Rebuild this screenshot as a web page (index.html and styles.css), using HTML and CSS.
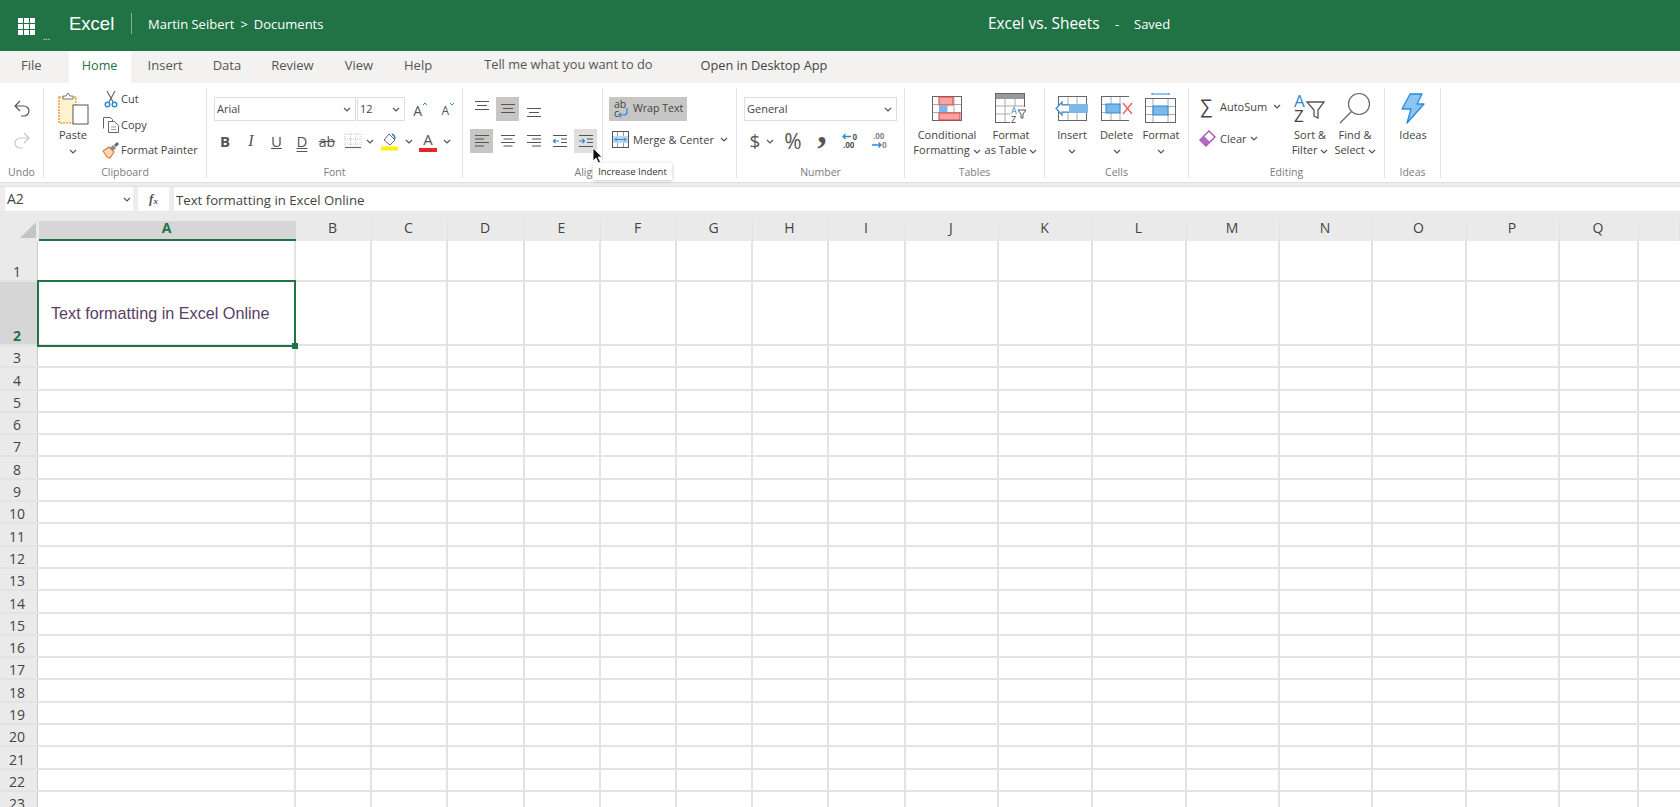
FILE: index.html
```html
<!DOCTYPE html>
<html lang="en">
<head>
<meta charset="utf-8">
<title>Excel vs. Sheets</title>
<link rel="stylesheet" href="styles.css">
</head>
<body>
<header class="hdr">
  <div class="waffle"><i></i><i></i><i></i><i></i><i></i><i></i><i></i><i></i><i></i><span class="dots">...</span></div>
  <div class="brand">Excel</div>
  <div class="crumb">Martin Seibert<span class="crumb-sep">&gt;</span>Documents</div>
  <div class="title">Excel vs. Sheets</div>
  <div class="dash">-</div>
  <div class="saved">Saved</div>
</header>

<nav class="tabs">
  <div class="tab tab-file">File</div>
  <div class="tab active">Home</div>
  <div class="tab">Insert</div>
  <div class="tab">Data</div>
  <div class="tab">Review</div>
  <div class="tab">View</div>
  <div class="tab">Help</div>
  <div class="tell">Tell me what you want to do</div>
  <div class="open">Open in Desktop App</div>
</nav>

<section class="ribbon">
  <div class="grp g-undo">
    <div class="body col-center">
      <svg class="undo" width="20" height="20" viewBox="0 0 20 20" fill="none" stroke="#555" stroke-width="1.2"><path d="M8 3 3 8l5 5M3 8h9a5 5 0 0 1 0 10H9"/></svg>
      <svg class="redo" width="20" height="20" viewBox="0 0 20 20" fill="none" stroke="#c8c8c8" stroke-width="1.2"><path d="m12 3 5 5-5 5M17 8H8a5 5 0 0 0 0 10h3"/></svg>
    </div>
    <div class="glabel">Undo</div>
  </div>

  <div class="grp g-clip">
    <div class="body flex">
      <div class="big paste">
        <div class="bigic">
          <svg width="31" height="33" viewBox="0 0 31 33" fill="none"><rect x="1" y="5" width="17" height="26" fill="#fdf3d0" stroke="#f0a24a" stroke-width="1.6" stroke-dasharray="2 1"/><path d="M5 7V4h3l2-3 2 3h3v3z" fill="#fff" stroke="#777"/><rect x="15" y="13" width="15" height="19" fill="#fff" stroke="#555"/></svg>
        </div>
        <div class="lbl">Paste</div>
        <svg class="chev" width="8" height="5" viewBox="0 0 8 5"><path d="m1 1 3 3 3-3" fill="none" stroke="#555" stroke-width="1.2"/></svg>
      </div>
      <div class="smalls">
        <div class="sm"><span class="smic"><svg width="14" height="18" viewBox="0 0 14 18" fill="none"><path d="M3 1l6 11M11 1 5 12" stroke="#666" stroke-width="1.2"/><circle cx="3.500" cy="14.500" r="2.300" stroke="#2b88d8" stroke-width="1.4"/><circle cx="10.500" cy="14.500" r="2.300" stroke="#2b88d8" stroke-width="1.400"/></svg></span>Cut</div>
        <div class="sm"><span class="smic"><svg width="18" height="17" viewBox="0 0 18 17" fill="none" stroke="#666"><path d="M1.500 12.500V1.500h7l2 2v2"/><path d="M6.500 5.500h6l4 4v7h-10z" fill="#fff"/><path d="M9 11h5M9 13.500h5" stroke="#999"/></svg></span>Copy</div>
        <div class="sm"><span class="smic"><svg width="18" height="18" viewBox="0 0 18 18" fill="none"><path d="m1 10 6-4 5 5-4 6-3-1z" fill="#fbd9b5" stroke="#e8743b" stroke-width="1.100"/><path d="m8 7 3-3 3 3-3 3z" fill="#888"/><path d="m12 4 3-3 2 2-3 3z" fill="#666"/></svg></span>Format Painter</div>
      </div>
    </div>
    <div class="glabel">Clipboard</div>
  </div>

  <div class="grp g-font">
    <div class="body">
      <div class="r1 flex">
        <div class="sel sel-font">Arial<svg class="chev" width="8" height="5" viewBox="0 0 8 5"><path d="m1 1 3 3 3-3" fill="none" stroke="#555" stroke-width="1.2"/></svg></div>
        <div class="sel sel-size">12<svg class="chev" width="8" height="5" viewBox="0 0 8 5"><path d="m1 1 3 3 3-3" fill="none" stroke="#555" stroke-width="1.2"/></svg></div>
        <div class="grow">A<svg width="6" height="4" viewBox="0 0 6 4"><path d="m1 3 2-2 2 2" fill="none" stroke="#2b88d8"/></svg></div>
        <div class="grow shrink">A<svg width="6" height="4" viewBox="0 0 6 4"><path d="m1 1 2 2 2-2" fill="none" stroke="#2b88d8"/></svg></div>
      </div>
      <div class="r2 flex fmt">
        <span class="w27 fb">B</span>
        <span class="w26 fi">I</span>
        <span class="w25 fu">U</span>
        <span class="w26 fd">D</span>
        <span class="w24 fs">ab</span>
        <span class="w27"><svg width="18" height="16" viewBox="0 0 18 16" fill="none"><path d="M1 1h16M1 6h16M1 11h16M1 1v11M6.500 1v11M12 1v11M17 1v11" stroke="#c8c8c8" stroke-dasharray="1 1"/><path d="M1 14.500h16" stroke="#666" stroke-width="1.200"/></svg></span>
        <span class="w8"><svg class="chev" width="8" height="5" viewBox="0 0 8 5"><path d="m1 1 3 3 3-3" fill="none" stroke="#555" stroke-width="1.2"/></svg></span>
        <span class="w32"><svg width="18" height="19" viewBox="0 0 18 19" fill="none"><path d="m3 8 5-6 6 6-5 5z" fill="#fff" stroke="#666"/><path d="M11 2c2 1 3 3 3 5" stroke="#2b88d8" stroke-width="1.500"/><rect y="14.500" width="17" height="4" fill="#fff100"/></svg></span>
        <span class="w6"><svg class="chev" width="8" height="5" viewBox="0 0 8 5"><path d="m1 1 3 3 3-3" fill="none" stroke="#555" stroke-width="1.2"/></svg></span>
        <span class="w32 fa">A</span>
        <span class="w6"><svg class="chev" width="8" height="5" viewBox="0 0 8 5"><path d="m1 1 3 3 3-3" fill="none" stroke="#555" stroke-width="1.2"/></svg></span>
      </div>
    </div>
    <div class="glabel">Font</div>
  </div>

  <div class="grp g-align">
    <div class="body flex">
      <div class="aligncol">
        <div class="r1 flex al-gap">
          <span class="ab"><svg class="v-top" width="16" height="12" viewBox="0 0 16 12"><path d="M1 1.500h14M3 5.500h10M1 9.500h14" stroke="#555" stroke-width="1.200"/></svg></span>
          <span class="ab on"><svg width="16" height="12" viewBox="0 0 16 12"><path d="M1 1.500h14M3 5.500h10M1 9.500h14" stroke="#555" stroke-width="1.200"/></svg></span>
          <span class="ab"><svg class="v-bot" width="16" height="12" viewBox="0 0 16 12"><path d="M1 1.500h14M3 5.500h10M1 9.500h14" stroke="#555" stroke-width="1.200"/></svg></span>
        </div>
        <div class="r2 flex al-gap">
          <span class="ab on"><svg width="16" height="14" viewBox="0 0 16 14"><path d="M1 1.500h14M1 5h9M1 8.500h14M1 12h9" stroke="#555" stroke-width="1.200"/></svg></span>
          <span class="ab"><svg width="16" height="14" viewBox="0 0 16 14"><path d="M1 1.500h14M3.500 5h9M1 8.500h14M3.500 12h9" stroke="#555" stroke-width="1.200"/></svg></span>
          <span class="ab"><svg width="16" height="14" viewBox="0 0 16 14"><path d="M1 1.500h14M6 5h9M1 8.500h14M6 12h9" stroke="#555" stroke-width="1.200"/></svg></span>
          <span class="ab"><svg width="16" height="14" viewBox="0 0 16 14" fill="none"><path d="M1 1.500h14M9 5h6M9 8.500h6M1 12.500h14" stroke="#555" stroke-width="1.200"/><path d="M7 7H1.500m2-2-2 2 2 2" stroke="#2b88d8" stroke-width="1.200"/></svg></span>
          <span class="ab hov"><svg width="16" height="14" viewBox="0 0 16 14" fill="none"><path d="M1 1.500h14M9 5h6M9 8.500h6M1 12.500h14" stroke="#555" stroke-width="1.200"/><path d="M1 7h5.500m-2-2 2 2-2 2" stroke="#2b88d8" stroke-width="1.200"/></svg></span>
        </div>
      </div>
      <div class="mergecol">
        <div class="wrap">
          <svg width="16" height="20" viewBox="0 0 16 20" fill="none"><text x="1" y="9" class="svgt">ab</text><text x="1" y="18" class="svgt">c</text><path d="M14 9v4a3 3 0 0 1-3 3H6m2-2-2 2 2 2" stroke="#2b88d8" stroke-width="1.200"/></svg>
          <span class="wrap-text">Wrap Text</span>
        </div>
        <div class="merge">
          <svg width="17" height="17" viewBox="0 0 17 17" fill="none"><rect x=".5" y=".5" width="16" height="16" stroke="#555"/><path d="M5.500 1v4M11.500 1v4M5.500 12v4M11.500 12v4" stroke="#999"/><rect x="1" y="5" width="15" height="7" fill="#b8dcf6"/><path d="M3 8.500h11M5 6.500l-2 2 2 2M12 6.500l2 2-2 2" stroke="#2b88d8"/></svg>
          <span>Merge &amp; Center</span>
          <svg class="chev" width="8" height="5" viewBox="0 0 8 5"><path d="m1 1 3 3 3-3" fill="none" stroke="#555" stroke-width="1.2"/></svg>
        </div>
      </div>
    </div>
    <div class="glabel">Alignment</div>
  </div>

  <div class="grp g-num">
    <div class="body">
      <div class="sel sel-gen">General<svg class="chev" width="8" height="5" viewBox="0 0 8 5"><path d="m1 1 3 3 3-3" fill="none" stroke="#555" stroke-width="1.2"/></svg></div>
      <div class="r2 flex numrow">
        <span class="w22 dollar">$</span>
        <span class="w8"><svg class="chev" width="8" height="5" viewBox="0 0 8 5"><path d="m1 1 3 3 3-3" fill="none" stroke="#555" stroke-width="1.2"/></svg></span>
        <span class="w38 pct">%</span>
        <span class="w20 comma">,</span>
        <span class="w36"><svg width="18" height="18" viewBox="0 0 18 18" fill="none"><path d="M10 4.500H2m2.500-2.500-2.500 2.500 2.500 2.500" stroke="#2b88d8" stroke-width="1.300"/><text x="11.500" y="8" class="svgn">0</text><text x="2" y="16" class="svgn">.00</text></svg></span>
        <span class="w24"><svg width="18" height="18" viewBox="0 0 18 18" fill="none"><text x="2" y="7" class="svgn light">.00</text><path d="M1 13h9m-2.500-2.500L10 13l-2.500 2.500" stroke="#2b88d8" stroke-width="1.300"/><text x="11" y="16" class="svgn light">0</text></svg></span>
      </div>
    </div>
    <div class="glabel">Number</div>
  </div>

  <div class="grp g-tables">
    <div class="body flex">
      <div class="big w76">
        <div class="bigic"><svg width="30" height="25" viewBox="0 0 30 25" fill="none"><rect x=".5" y=".5" width="29" height="24" stroke="#666"/><path d="M8 1v23M15 1v23M22 1v23M1 8.500h28M1 16.500h28" stroke="#aaa"/><rect x="7" y="1" width="14" height="8" fill="#f4a6a6" stroke="#e43d3d"/><rect x="7" y="9" width="8" height="7" fill="#7db9e8"/><rect x="7" y="17" width="21" height="7" fill="#f4a6a6" stroke="#e43d3d"/></svg></div>
        <div class="lbl">Conditional</div>
        <div class="lbl">Formatting <svg class="chev" width="8" height="5" viewBox="0 0 8 5"><path d="m1 1 3 3 3-3" fill="none" stroke="#555" stroke-width="1.2"/></svg></div>
      </div>
      <div class="big w52">
        <div class="bigic"><svg width="32" height="31" viewBox="0 0 32 31" fill="none"><rect x=".5" y=".5" width="29" height="29" stroke="#666"/><rect x="1" y="1" width="28" height="5" fill="#999"/><path d="M10 6v23M20 6v12M1 13h28M1 21h14" stroke="#aaa"/><rect x="15" y="14" width="17" height="17" fill="#fff"/><text x="16" y="21" class="svga blue">A</text><text x="16" y="30" class="svga">Z</text><path d="M23 17h8l-3 4v4h-2v-4z" stroke="#555"/></svg></div>
        <div class="lbl">Format</div>
        <div class="lbl">as Table <svg class="chev" width="8" height="5" viewBox="0 0 8 5"><path d="m1 1 3 3 3-3" fill="none" stroke="#555" stroke-width="1.2"/></svg></div>
      </div>
    </div>
    <div class="glabel">Tables</div>
  </div>

  <div class="grp g-cells">
    <div class="body flex">
      <div class="big w44">
        <div class="bigic"><svg width="34" height="25" viewBox="0 0 34 25" fill="none"><rect x="3.500" y=".5" width="28" height="24" stroke="#666"/><path d="M13 1v23M22 1v23M4 8.500h27M4 16.500h27" stroke="#aaa"/><rect x="14" y="8" width="19" height="9" fill="#7db9e8"/><path d="M14 9H7V6L1 12.500 7 19v-3h7" fill="#fff" stroke="#2b88d8" stroke-width="1.200"/></svg></div>
        <div class="lbl">Insert</div>
        <svg class="chev" width="8" height="5" viewBox="0 0 8 5"><path d="m1 1 3 3 3-3" fill="none" stroke="#555" stroke-width="1.2"/></svg>
      </div>
      <div class="big w45">
        <div class="bigic"><svg width="32" height="25" viewBox="0 0 32 25" fill="none"><rect x=".5" y=".5" width="27" height="24" stroke="#666"/><path d="M10 1v23M19 1v23M1 8.500h27M1 16.500h27" stroke="#aaa"/><rect x="5" y="8" width="14" height="9" fill="#7db9e8" stroke="#2b88d8"/><path d="m19 8 4 4.500-4 4.500" fill="#7db9e8"/><rect x="20" y="1" width="12" height="23" fill="#fff"/><path d="m22 7 9 11m0-11-9 11" stroke="#f0605a" stroke-width="1.400"/></svg></div>
        <div class="lbl">Delete</div>
        <svg class="chev" width="8" height="5" viewBox="0 0 8 5"><path d="m1 1 3 3 3-3" fill="none" stroke="#555" stroke-width="1.2"/></svg>
      </div>
      <div class="big w44">
        <div class="bigic"><svg width="32" height="30" viewBox="0 0 32 30" fill="none"><path d="M7 1h17M7 0v2M24 0v2" stroke="#2b88d8"/><rect x=".5" y="5.500" width="30" height="24" stroke="#666"/><path d="M8 6v23M23 6v23M1 13.500h29M1 21.500h29" stroke="#aaa"/><rect x="8" y="13" width="15" height="9" fill="#7db9e8" stroke="#2b88d8"/></svg></div>
        <div class="lbl">Format</div>
        <svg class="chev" width="8" height="5" viewBox="0 0 8 5"><path d="m1 1 3 3 3-3" fill="none" stroke="#555" stroke-width="1.2"/></svg>
      </div>
    </div>
    <div class="glabel">Cells</div>
  </div>

  <div class="grp g-edit">
    <div class="body flex">
      <div class="editcol">
        <div class="ed"><span class="sigma">&#8721;</span>AutoSum<svg class="chev" width="8" height="5" viewBox="0 0 8 5"><path d="m1 1 3 3 3-3" fill="none" stroke="#555" stroke-width="1.2"/></svg></div>
        <div class="ed ed2"><svg class="erase" width="17" height="17" viewBox="0 0 17 17" fill="none"><path d="m1 10 9-9 6 6-9 9z" fill="#fff" stroke="#a94fb5" stroke-width="1.400"/><path d="m1 10 4-4 6 6-4 4z" fill="#b566c2"/></svg>Clear<svg class="chev" width="8" height="5" viewBox="0 0 8 5"><path d="m1 1 3 3 3-3" fill="none" stroke="#555" stroke-width="1.2"/></svg></div>
      </div>
      <div class="big w52">
        <div class="bigic"><svg width="32" height="30" viewBox="0 0 32 30" fill="none"><text x="0" y="14" class="svgb blue">A</text><text x="0" y="29" class="svgb">Z</text><path d="M13 9h17l-6 8v8l-4-2v-6z" fill="#fff" stroke="#555" stroke-width="1.300"/></svg></div>
        <div class="lbl">Sort &amp;</div>
        <div class="lbl">Filter <svg class="chev" width="8" height="5" viewBox="0 0 8 5"><path d="m1 1 3 3 3-3" fill="none" stroke="#555" stroke-width="1.2"/></svg></div>
      </div>
      <div class="big w38">
        <div class="bigic"><svg width="32" height="32" viewBox="0 0 32 32" fill="none"><circle cx="20" cy="12" r="10.500" fill="#fff" stroke="#666" stroke-width="1.200"/><path d="M12.500 19.500 1 31" stroke="#666" stroke-width="1.300"/></svg></div>
        <div class="lbl">Find &amp;</div>
        <div class="lbl">Select <svg class="chev" width="8" height="5" viewBox="0 0 8 5"><path d="m1 1 3 3 3-3" fill="none" stroke="#555" stroke-width="1.2"/></svg></div>
      </div>
    </div>
    <div class="glabel">Editing</div>
  </div>

  <div class="grp g-ideas">
    <div class="body flex">
      <div class="big w56">
        <div class="bigic"><svg width="24" height="31" viewBox="0 0 24 31" fill="none"><path d="M9 1h12l-5 10h7L6 30l4-14H1z" fill="#8cc4f3" stroke="#2b88d8" stroke-width="1.300" stroke-linejoin="round"/></svg></div>
        <div class="lbl">Ideas</div>
      </div>
    </div>
    <div class="glabel">Ideas</div>
  </div>

  <div class="tooltip">Increase Indent</div>
  <svg class="cursor" width="12" height="17" viewBox="0 0 12 17"><path d="M1 1v13l3-3 2.500 5 2-1L6 10h4z" fill="#111" stroke="#fff" stroke-width=".8"/></svg>
</section>

<div class="band"></div>

<div class="fbar">
  <div class="namebox">A2<svg class="chev" width="8" height="5" viewBox="0 0 8 5"><path d="m1 1 3 3 3-3" fill="none" stroke="#555" stroke-width="1.2"/></svg></div>
  <div class="fx">f<sub>x</sub></div>
  <div class="finput">Text formatting in Excel Online</div>
</div>

<div class="colband"></div>
<div class="colhead">
  <div class="corner"></div>
  <div class="ch ch-on">A</div><div class="ch">B</div><div class="ch">C</div><div class="ch">D</div><div class="ch">E</div><div class="ch">F</div><div class="ch">G</div><div class="ch">H</div><div class="ch">I</div><div class="ch">J</div><div class="ch">K</div><div class="ch">L</div><div class="ch">M</div><div class="ch">N</div><div class="ch">O</div><div class="ch">P</div><div class="ch">Q</div><div class="ch"></div>
</div>

<main class="sheet">
  <div class="row r-first"><div class="rh">1</div></div>
  <div class="row r-sel"><div class="rh rh-on">2</div><div class="cellA">Text formatting in Excel Online</div></div>
  <div class="row"><div class="rh">3</div></div>
  <div class="row"><div class="rh">4</div></div>
  <div class="row"><div class="rh">5</div></div>
  <div class="row"><div class="rh">6</div></div>
  <div class="row"><div class="rh">7</div></div>
  <div class="row"><div class="rh">8</div></div>
  <div class="row"><div class="rh">9</div></div>
  <div class="row"><div class="rh">10</div></div>
  <div class="row"><div class="rh">11</div></div>
  <div class="row"><div class="rh">12</div></div>
  <div class="row"><div class="rh">13</div></div>
  <div class="row"><div class="rh">14</div></div>
  <div class="row"><div class="rh">15</div></div>
  <div class="row"><div class="rh">16</div></div>
  <div class="row"><div class="rh">17</div></div>
  <div class="row"><div class="rh">18</div></div>
  <div class="row"><div class="rh">19</div></div>
  <div class="row"><div class="rh">20</div></div>
  <div class="row"><div class="rh">21</div></div>
  <div class="row"><div class="rh">22</div></div>
  <div class="row"><div class="rh">23</div></div>
  <div class="collines"><i></i><i></i><i></i><i></i><i></i><i></i><i></i><i></i><i></i><i></i><i></i><i></i><i></i><i></i><i></i><i></i><i></i><i></i></div>
  <div class="selection"><span class="handle"></span></div>
</main>
</body>
</html>
```

FILE: styles.css
```css
:root {
  --cols: 39px 257px 76px 76px 77px 76px 76px 76px 76px 77px 93px 94px 94px 93px 93px 94px 93px 79px 41px;
  --ui: "Open Sans", "Noto Sans", sans-serif;
}
* { box-sizing: border-box; }
html, body { margin: 0; height: 807px; overflow: hidden; background: #fff; }
body { font-family: var(--ui); color: #444; font-size: 11px; }
.flex { display: flex; }

/* title bar */
.hdr { height: 51px; background: #217346; color: #fff; display: flex; align-items: center; white-space: nowrap; }
.waffle { position: relative; margin-left: 18px; width: 17px; height: 17px; display: grid; grid-template-columns: repeat(3, 5px); gap: 1px; margin-top: 2px; }
.waffle i { background: #fff; }
.dots { position: absolute; left: 25px; top: 12px; font-size: 9px; line-height: 14px; }
.brand { margin-left: 34px; width: 63px; font: 18.5px "Liberation Sans", sans-serif; border-right: 1px solid rgba(255,255,255,.45); line-height: 21px; height: 21px; margin-top: -4px; }
.crumb { margin-left: 16px; width: 840px; font-size: 13px; margin-top: -3px; }
.crumb-sep { margin: 0 6px; }
.title { font-size: 15.4px; width: 127px; margin-top: -5px; }
.dash { width: 19px; font-size: 13px; margin-top: -4px; }
.saved { font-size: 13px; margin-top: -4px; }

/* tab strip */
.tabs { height: 32px; background: #f3f2f1; display: flex; align-items: stretch; font-size: 13px; white-space: nowrap; }
.tab { padding: 0 12px; margin-right: 6px; line-height: 29px; color: #555; }
.tab:nth-child(n+6) { margin-left: 1px; }
.tab-file { margin-left: 9px; margin-right: 15px; }
.tab.active { background: #fff; color: #217346; padding: 0; margin-right: 5px; font-size: 12.6px; width: 62px; text-align: center; }
.tell { margin-left: 34px; line-height: 27px; color: #555; font-size: 12.8px; }
.open { margin-left: 48px; line-height: 29px; color: #444; font-size: 12.8px; }

/* ribbon */
.ribbon { position: relative; height: 99px; background: #fff; display: flex; padding-top: 5px; white-space: nowrap; }
.grp { height: 90px; border-right: 1px solid #e4e3e2; display: flex; flex-direction: column; }
.body { flex: 1; min-height: 0; }
.glabel { height: 12px; line-height: 13px; text-align: center; font-size: 10.5px; color: #7a7a7a; }
.g-undo { width: 44px; }
.g-clip { width: 163px; }
.g-font { width: 256px; }
.g-font .body { padding: 9px 0 0 7px; }
.g-align { width: 274px; }
.g-num { width: 168px; }
.g-num .body { padding: 9px 0 0 7px; }
.g-tables { width: 140px; }
.g-tables .body { padding-left: 4px; }
.g-cells { width: 144px; }
.g-cells .body { padding-left: 5px; }
.g-edit { width: 196px; }
.g-edit .body { padding-left: 10px; }
.g-ideas { width: 56px; }
.col-center { display: flex; flex-direction: column; align-items: center; padding-top: 10px; gap: 12px; }
.chev { display: inline-block; vertical-align: middle; flex: none; }

.big { display: flex; flex-direction: column; align-items: center; padding-top: 4px; flex: none; }
.bigic { height: 35px; padding-bottom: 3px; display: flex; align-items: center; justify-content: center; }
.lbl { line-height: 15px; }
.big > .chev { margin-top: 7px; }
.paste { width: 42px; margin-left: 8px; }
.w76 { width: 76px; } .w52 { width: 52px; } .w44 { width: 44px; } .w45 { width: 45px; } .w56 { width: 56px; }

.smalls { margin-left: 7px; margin-top: -2px; }
.sm { height: 25.5px; display: flex; align-items: center; }
.smic { width: 20px; display: flex; justify-content: center; }

.sel { border: 1px solid #ddd; height: 24px; display: flex; align-items: center; justify-content: space-between; padding: 0 4px 2px 2px; font-size: 11px; }
.sel .chev { margin-top: 2px; }
.sel-font { width: 142px; }
.sel-size { width: 48px; margin-left: 1px; }
.grow { width: 23px; text-align: right; font-size: 14px; color: #555; display: flex; align-items: center; justify-content: flex-end; padding-top: 3px; }
.grow svg { align-self: flex-start; margin-top: 2px; }
.shrink { font-size: 12px; width: 27px; }
.r2 { margin-top: 8px; height: 24px; align-items: center; }
.fmt span, .numrow span { display: flex; justify-content: center; align-items: center; flex: none; height: 24px; color: #555; }
.w6 { width: 6px; } .w8 { width: 8px; } .w20 { width: 20px; } .w22 { width: 22px; } .w24 { width: 24px; } .w25 { width: 25px; } .w26 { width: 26px; } .w27 { width: 27px; } .w32 { width: 32px; } .w36 { width: 36px; }
.w38 { width: 38px; }
.fmt .fb { font-weight: 700; font-size: 15px; margin-left: -4px; padding-left: 3px; margin-right: 1px; }
.fmt .fi { font: italic 16px "Liberation Serif", serif; }
.fmt .fu { text-decoration: underline; font-size: 15px; }
.fmt .fd { text-decoration: underline double; font-size: 15px; }
.fmt .fs { text-decoration: line-through; font-size: 14px; }
.fmt .fa { font-size: 15px; line-height: 15px; position: relative; padding-bottom: 4px; }
.fmt .fa::after { content: ""; position: absolute; left: 7px; right: 7px; bottom: 1px; height: 4px; background: #e8262a; }

.aligncol { width: 140px; padding: 9px 0 0 7px; border-right: 1px solid #e4e3e2; height: 72px; }
.al-gap { gap: 3px; }
.aligncol .r2 { margin-top: 8px; }
.ab { width: 23px; height: 24px; display: flex; align-items: center; justify-content: center; }
.ab.on { background: #c8c6c4; }
.ab.hov { background: #e1dfdd; }
.v-top { transform: translateY(-3px); }
.v-bot { transform: translateY(4px); }
.mergecol { padding: 9px 0 0 6px; }
.wrap { width: 78px; height: 24px; background: #c8c6c4; display: flex; align-items: center; gap: 4px; padding-left: 4px; font-size: 10.6px; }
.wrap-text { margin-top: -3px; }
.merge { margin-top: 7px; height: 23px; display: flex; align-items: center; padding-left: 3px; gap: 4px; }
.merge .chev { margin-left: 2px; }
.svgt { font: 10.500px var(--ui); fill: #444; }
.svgn { font: 700 8px var(--ui); fill: #555; }
.svgn.light { fill: #888; }
.svga { font: 9px var(--ui); fill: #444; }
.svgb { font: 17px var(--ui); fill: #444; }
.blue { fill: #2b88d8; }

.sel-gen { width: 153px; }
.numrow { margin-top: 8px; }
.numrow .dollar { font-size: 19px; }
.numrow .pct { font-size: 21px; }
.numrow .comma { font: 700 38px/38px "Liberation Serif", serif; align-items: flex-start; transform: translateY(-18px); }

.editcol { width: 85px; padding-top: 5px; }
.ed { height: 26px; display: flex; align-items: center; }
.ed2 { margin-top: 6px; }
.sigma { width: 21px; font-size: 19px; line-height: 19px; color: #444; padding-left: 1px; }
.ed .chev { margin-left: 6px; }
.ed2 .chev { margin-left: 3px; }
.erase { margin-right: 4px; }

.tooltip { position: absolute; left: 593px; top: 80px; width: 79px; height: 17px; background: #fff; box-shadow: 0 1px 4px rgba(0,0,0,.22); font-size: 9.500px; line-height: 17px; text-align: center; color: #333; }
.cursor { position: absolute; left: 592px; top: 64px; }

/* formula bar */
.band { height: 5px; background: #eeedec; border-top: 1px solid #e1e0df; border-bottom: 1px solid #e1e0df; }
.fbar { height: 24px; background: #eeedec; display: flex; }
.namebox { margin-left: 5px; width: 128px; background: #fff; font-size: 14px; line-height: 20px; padding: 0 2px 0 2px; display: flex; align-items: center; justify-content: space-between; }
.fx { margin-left: 5px; width: 31px; background: #fff; text-align: center; font: italic 700 13px/24px "Liberation Serif", serif; color: #555; }
.fx sub { font-size: 9px; vertical-align: -1px; line-height: 0; }
.finput { margin-left: 5px; flex: 1; background: #fff; padding-left: 2px; font-size: 13.2px; line-height: 26px; color: #444; }

/* grid */
.colband { height: 10px; background: #ebeaea; }
.colhead { display: grid; grid-template-columns: var(--cols); height: 20px; background: #ebeaea; }
.corner { position: relative; }
.corner::after { content: ""; position: absolute; left: 20px; top: 1px; border-style: solid; border-width: 0 0 16px 16px; border-color: transparent transparent #c4c4c4 transparent; }
.ch { text-align: center; font-size: 14px; line-height: 14px; color: #444; border-right: 1px solid #e2e1e1; padding-right: 2px; }
.ch-on { background: #d6d6d6; color: #217346; font-weight: 700; border-right: 0; border-bottom: 2px solid #217346; }

.sheet { position: relative; height: 566px; overflow: hidden; }
.row { height: 22.300px; display: flex; border-bottom: 2px solid #e3e3e3; }
.r-first { height: 41px; }
.r-sel { height: 64px; }
.rh { width: 38px; height: 100%; background: #ebeaea; border-right: 1px solid #ccc; text-align: center; font-size: 14px; line-height: 17px; color: #444; display: flex; align-items: flex-end; justify-content: center; flex: none; padding-right: 3px; }
.rh-on { background: #d6d6d6; color: #217346; font-weight: 700; }
.cellA { margin-left: 13px; align-self: center; font: 16.2px "Liberation Sans", sans-serif; color: #5a4063; }
.collines { position: absolute; inset: 0; display: grid; grid-template-columns: var(--cols); pointer-events: none; }
.collines i { border-right: 2px solid #e3e3e3; }
.collines i:first-child { border: 0; }
.selection { position: absolute; left: 37px; top: 39px; width: 259px; height: 67px; border: 2px solid #217346; }
.handle { position: absolute; right: -4px; bottom: -4px; width: 6px; height: 6px; background: #217346; }
```
